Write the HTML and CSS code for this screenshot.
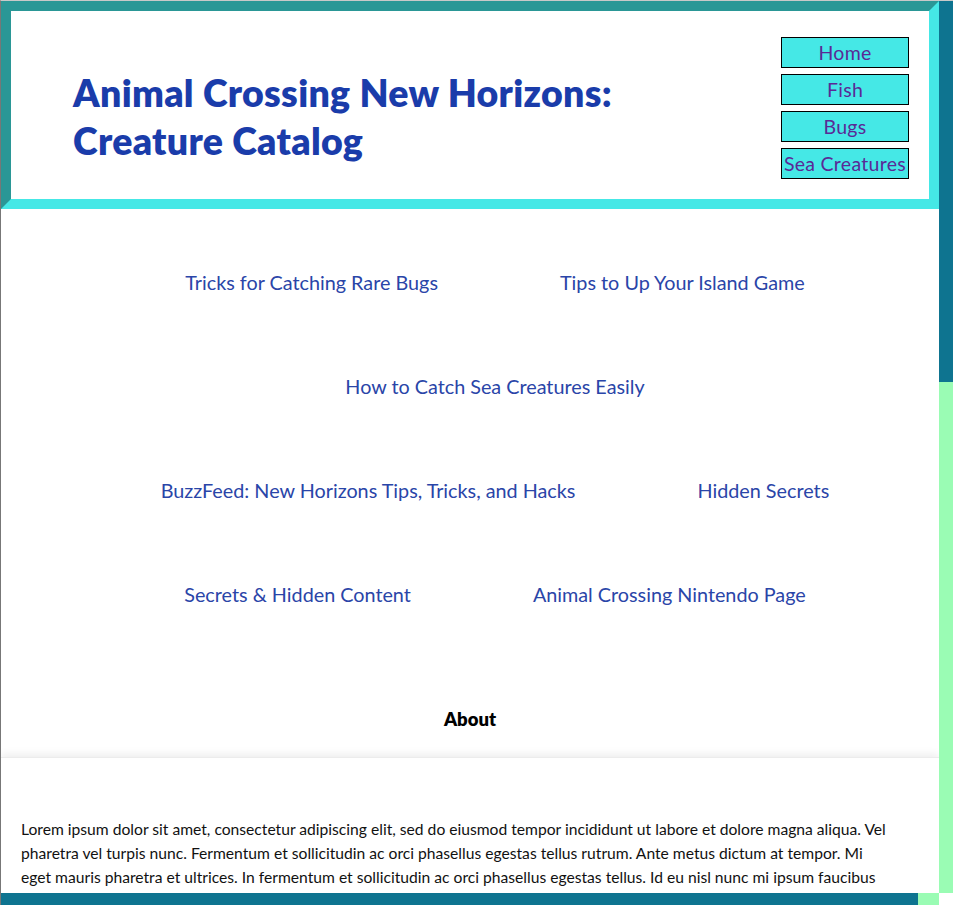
FILE: index.html
```html
<!DOCTYPE html>
<html lang="en">
<head>
<meta charset="utf-8">
<title>Animal Crossing New Horizons: Creature Catalog</title>
<link rel="stylesheet" href="styles.css">
</head>
<body>
<div class="page">
  <header class="site-header">
    <h1 class="site-title">Animal Crossing New Horizons:<br>Creature Catalog</h1>
    <nav class="main-nav">
      <a class="nav-btn" href="#">Home</a>
      <a class="nav-btn" href="#">Fish</a>
      <a class="nav-btn" href="#">Bugs</a>
      <a class="nav-btn" href="#">Sea Creatures</a>
    </nav>
  </header>

  <section class="resources">
    <div class="link-row">
      <a class="res-link" href="#">Tricks for Catching Rare Bugs</a>
      <a class="res-link" href="#">Tips to Up Your Island Game</a>
    </div>
    <div class="link-row">
      <a class="res-link" href="#">How to Catch Sea Creatures Easily</a>
    </div>
    <div class="link-row">
      <a class="res-link" href="#">BuzzFeed: New Horizons Tips, Tricks, and Hacks</a>
      <a class="res-link" href="#">Hidden Secrets</a>
    </div>
    <div class="link-row">
      <a class="res-link" href="#">Secrets &amp; Hidden Content</a>
      <a class="res-link" href="#">Animal Crossing Nintendo Page</a>
    </div>
  </section>

  <h2 class="about-title">About</h2>

  <section class="about">
    <p>Lorem ipsum dolor sit amet, consectetur adipiscing elit, sed do eiusmod tempor incididunt ut labore et dolore magna aliqua. Vel pharetra vel turpis nunc. Fermentum et sollicitudin ac orci phasellus egestas tellus rutrum. Ante metus dictum at tempor. Mi eget mauris pharetra et ultrices. In fermentum et sollicitudin ac orci phasellus egestas tellus. Id eu nisl nunc mi ipsum faucibus vitae aliquet nec. Ullamcorper malesuada proin libero nunc consequat interdum varius sit amet. Sed vulputate mi sit amet mauris commodo quis imperdiet massa. Feugiat in fermentum posuere urna nec tincidunt praesent semper feugiat.</p>
    <p>Nibh tellus molestie nunc non blandit massa enim nec dui. Pellentesque habitant morbi tristique senectus et netus et malesuada fames. Egestas sed tempus urna et pharetra pharetra massa massa ultricies. Tortor at auctor urna nunc id cursus metus aliquam eleifend. Amet consectetur adipiscing elit duis tristique sollicitudin nibh sit amet.</p>
  </section>
</div>

<div class="vscroll" aria-hidden="true"><div class="vscroll-thumb"></div></div>
<div class="hscroll" aria-hidden="true"><div class="hscroll-thumb"></div></div>
<div class="scroll-corner" aria-hidden="true"></div>
</body>
</html>
```

FILE: styles.css
```css
html {
  border-top: 1px solid #c9c9c9;
  border-left: 1px solid #777777;
  overflow: hidden;
}

body {
  margin: 0;
  font-family: "Lato", "Noto Sans", sans-serif;
  color: #111111;
  background: #ffffff;
}

.page {
  margin-right: 14px;
}

.site-header {
  display: flex;
  justify-content: space-between;
  align-items: flex-start;
  height: 208px;
  box-sizing: border-box;
  border: 10px solid;
  border-color: #2a9796 #45e8e6 #45e8e6 #2a9796;
  padding: 26px 20px 0 62px;
}

.site-title {
  margin: 0;
  padding-top: 32px;
  font-family: "Lato", sans-serif;
  font-weight: 800;
  font-size: 37.5px;
  line-height: 48px;
  color: #1a3caa;
  letter-spacing: 0.3px;
}

.main-nav {
  display: flex;
  flex-direction: column;
  gap: 6px;
  width: 128px;
}

.nav-btn {
  display: flex;
  align-items: center;
  justify-content: center;
  height: 31px;
  box-sizing: border-box;
  border: 1px solid #000000;
  background: #45e8e6;
  color: #5a2a96;
  text-decoration: none;
  font-size: 19.5px;
  letter-spacing: 0.3px;
  white-space: nowrap;
}

.resources {
  display: flex;
  flex-direction: column;
  gap: 80px;
  padding: 61px 0 0 50px;
}

.link-row {
  display: flex;
  justify-content: center;
  gap: 122px;
  line-height: 24px;
}

.res-link {
  color: #2a45a8;
  text-decoration: none;
  font-size: 19.8px;
  white-space: nowrap;
}

.about-title {
  margin: 101px 0 0;
  text-align: center;
  font-size: 18.5px;
  line-height: 24px;
  font-weight: 800;
  color: #000000;
  padding-bottom: 26px;
}

.about {
  min-height: 400px;
  padding: 59px 45px 0 20px;
  box-shadow: 0 -3px 8px rgba(0, 0, 0, 0.07);
  border-top: 1px solid #ececec;
  font-size: 15.65px;
  line-height: 24px;
  color: #111111;
}

.about p {
  margin: 0 0 24px;
}

.vscroll {
  position: fixed;
  top: 1px;
  right: 0;
  width: 14px;
  height: 892px;
  background: #9afcb4;
}

.vscroll-thumb {
  height: 381px;
  background: #0e7490;
}

.hscroll {
  position: fixed;
  left: 1px;
  bottom: 0;
  width: 938px;
  height: 12px;
  background: #9afcb4;
}

.hscroll-thumb {
  width: 917px;
  height: 100%;
  background: #0e7490;
}

.scroll-corner {
  position: fixed;
  right: 0;
  bottom: 0;
  width: 14px;
  height: 12px;
  background: #ffffff;
}
```
